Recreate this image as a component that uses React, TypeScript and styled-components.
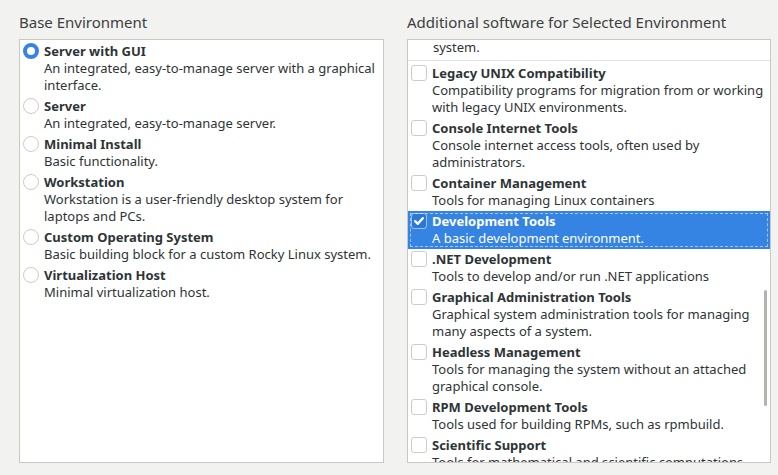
import React from 'react'
import styled, { createGlobalStyle } from 'styled-components'

const GlobalStyle = createGlobalStyle`
  html, body {
    margin: 0;
    padding: 0;
    background: #f2f2f0;
  }
  body {
    font-family: "Noto Sans", "DejaVu Sans", sans-serif;
    color: #2e3436;
  }
`

const Page = styled.div`
  display: grid;
  grid-template-columns: 365px 364px;
  column-gap: 23px;
  padding: 12px 7px 0 19px;
  height: 475px;
  box-sizing: border-box;
`

const Column = styled.section`
  display: flex;
  flex-direction: column;
`

const Heading = styled.h2`
  margin: 0 0 7px 0;
  font-size: 15px;
  line-height: 20px;
  font-weight: 400;
  color: #3d3f40;
`

const Box = styled.div`
  position: relative;
  height: 424px;
  box-sizing: border-box;
  border: 1px solid #cbc8c4;
  background: #ffffff;
  overflow: hidden;
`

const List = styled.ul<{ $offset?: number }>`
  list-style: none;
  margin: 0;
  padding: ${p => p.$offset ?? 0}px 0 0 0;
`

const Row = styled.li<{ $selected?: boolean }>`
  position: relative;
  display: flex;
  align-items: flex-start;
  gap: 5px;
  padding: 2px 4px 2px 3px;
  font-size: 13px;
  line-height: 17px;
  background: ${p => (p.$selected ? '#3584e4' : 'transparent')};
  color: ${p => (p.$selected ? '#ffffff' : '#2e3436')};

  &::after {
    content: ${p => (p.$selected ? "''" : 'none')};
    position: absolute;
    inset: 2px;
    border: 1px dashed rgba(255, 255, 255, 0.55);
    pointer-events: none;
  }
`

const Texts = styled.div`
  display: flex;
  flex-direction: column;
  min-width: 0;
`

const Title = styled.span`
  font-weight: 700;
`

const Desc = styled.span`
  font-weight: 400;
`

const Radio = styled.span<{ $checked?: boolean }>`
  flex: none;
  width: 16px;
  height: 16px;
  box-sizing: border-box;
  border-radius: 50%;
  background: #ffffff;
  border: ${p => (p.$checked ? '4px solid #3584e4' : '1px solid #cfcbc7')};
`

const Check = styled.span<{ $checked?: boolean }>`
  flex: none;
  display: flex;
  align-items: center;
  justify-content: center;
  width: 16px;
  height: 16px;
  box-sizing: border-box;
  border-radius: 3px;
  background: ${p => (p.$checked ? '#2a78da' : '#ffffff')};
  border: 1px solid ${p => (p.$checked ? '#9cc2f0' : '#cfcbc7')};
`

const ScrollTail = styled.div`
  margin-top: -1px;
  padding: 0 4px 2px 25px;
  font-size: 13px;
  line-height: 17px;
`

const Separator = styled.hr`
  border: none;
  height: 1px;
  background: #e3e1de;
  margin: 2px 0 2px 0;
`

const Scrollbar = styled.div`
  position: absolute;
  right: 3px;
  top: 250px;
  width: 3px;
  height: 116px;
  border-radius: 2px;
  background: #b5b3b0;
`

type Item = { title: string; desc: string[]; checked?: boolean }

const environments: Item[] = [
  { title: 'Server with GUI', desc: ['An integrated, easy-to-manage server with a graphical', 'interface.'], checked: true },
  { title: 'Server', desc: ['An integrated, easy-to-manage server.'] },
  { title: 'Minimal Install', desc: ['Basic functionality.'] },
  { title: 'Workstation', desc: ['Workstation is a user-friendly desktop system for', 'laptops and PCs.'] },
  { title: 'Custom Operating System', desc: ['Basic building block for a custom Rocky Linux system.'] },
  { title: 'Virtualization Host', desc: ['Minimal virtualization host.'] },
]

const addons: Item[] = [
  { title: 'Legacy UNIX Compatibility', desc: ['Compatibility programs for migration from or working', 'with legacy UNIX environments.'] },
  { title: 'Console Internet Tools', desc: ['Console internet access tools, often used by', 'administrators.'] },
  { title: 'Container Management', desc: ['Tools for managing Linux containers'] },
  { title: 'Development Tools', desc: ['A basic development environment.'], checked: true },
  { title: '.NET Development', desc: ['Tools to develop and/or run .NET applications'] },
  { title: 'Graphical Administration Tools', desc: ['Graphical system administration tools for managing', 'many aspects of a system.'] },
  { title: 'Headless Management', desc: ['Tools for managing the system without an attached', 'graphical console.'] },
  { title: 'RPM Development Tools', desc: ['Tools used for building RPMs, such as rpmbuild.'] },
  { title: 'Scientific Support', desc: ['Tools for mathematical and scientific computations', 'and parallel computing.'] },
]

function CheckMark() {
  return (
    <svg width="12" height="12" viewBox="0 0 12 12">
      <path d="M2.2 6.2 L4.8 8.8 L9.8 3.2" fill="none" stroke="#ffffff" strokeWidth="2.4" strokeLinecap="round" strokeLinejoin="round" />
    </svg>
  )
}

export default function App() {
  return (
    <>
      <GlobalStyle />
      <Page>
        <Column>
          <Heading>Base Environment</Heading>
          <Box>
            <List $offset={1}>
              {environments.map(env => (
                <Row key={env.title}>
                  <Radio $checked={env.checked} />
                  <Texts>
                    <Title>{env.title}</Title>
                    {env.desc.map(line => <Desc key={line}>{line}</Desc>)}
                  </Texts>
                </Row>
              ))}
            </List>
          </Box>
        </Column>
        <Column>
          <Heading>Additional software for Selected Environment</Heading>
          <Box>
            <ScrollTail>system.</ScrollTail>
            <Separator />
            <List>
              {addons.map(addon => (
                <Row key={addon.title} $selected={addon.checked}>
                  <Check $checked={addon.checked}>{addon.checked && <CheckMark />}</Check>
                  <Texts>
                    <Title>{addon.title}</Title>
                    {addon.desc.map(line => <Desc key={line}>{line}</Desc>)}
                  </Texts>
                </Row>
              ))}
            </List>
            <Scrollbar />
          </Box>
        </Column>
      </Page>
    </>
  )
}
